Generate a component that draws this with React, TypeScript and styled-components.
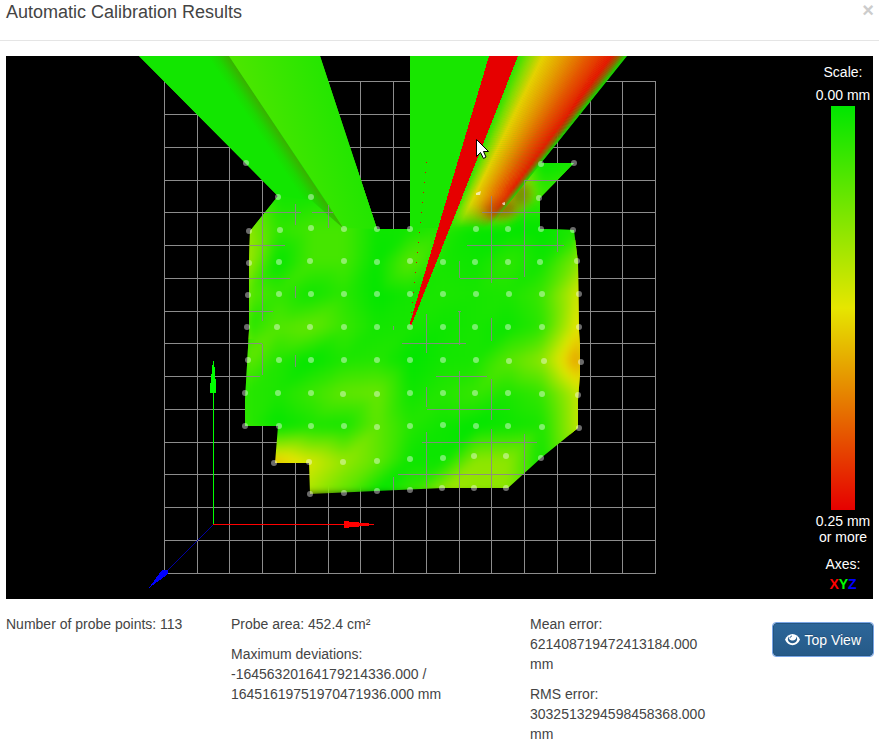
import React from "react";
import styled, { createGlobalStyle } from "styled-components";

const GlobalStyle = createGlobalStyle`
  * { box-sizing: border-box; }
  body {
    margin: 0;
    background: #fff;
    color: #444;
    font: 14px/20px "Liberation Sans", Arial, sans-serif;
  }
`;

const Header = styled.header`
  display: flex;
  justify-content: space-between;
  align-items: flex-start;
  height: 41px;
  padding: 0 5px 0 6px;
  border-bottom: 1px solid #e5e5e5;
`;

const Title = styled.h4`
  margin: 0;
  font-size: 18px;
  line-height: 24px;
  font-weight: 400;
`;

const CloseButton = styled.button`
  padding: 0;
  border: 0;
  background: none;
  color: #ccc;
  font: bold 20px/20px "Liberation Sans", Arial, sans-serif;
  cursor: pointer;
`;

const Body = styled.main`
  padding: 15px 6px 0;
`;

const Viewport = styled.section`
  position: relative;
  background: #000;
  color: #fff;
`;

const Scene = styled.svg`
  display: block;
  width: 100%;
  height: auto;
`;

const Legend = styled.aside`
  position: absolute;
  top: 0;
  right: 0;
  bottom: 0;
  width: 60px;
  padding: 8px 0 7px;
  display: flex;
  flex-direction: column;
  align-items: center;
  text-align: center;
  line-height: 16px;
  white-space: nowrap;
`;

const LegendTitle = styled.div`
  margin-bottom: 7px;
`;

const ScaleBar = styled.div`
  flex: 1;
  width: 24px;
  margin: 3px 0;
  background: linear-gradient(#00e600, #e6e600 50%, #e60000);
`;

const AxesTitle = styled.div`
  margin: 11px 0 4px;
`;

const AxisName = styled.b<{ $color: string }>`
  color: ${(p) => p.$color};
`;

const Summary = styled.section`
  display: grid;
  grid-template-columns: 225fr 299fr 225fr 118fr;
  padding-top: 15px;
`;

const Column = styled.div`
  min-width: 0;
  padding-right: 36px;
`;

const Result = styled.p`
  margin: 0 0 10px;
`;

const Actions = styled.div`
  display: flex;
  justify-content: flex-end;
  align-items: flex-start;
  padding-top: 9px;
`;

const PrimaryButton = styled.button`
  display: inline-flex;
  align-items: center;
  gap: 4px;
  height: 33px;
  padding: 0 11px;
  border: 1px solid #245580;
  border-radius: 3px;
  outline: 1px solid #78a5e6;
  background: linear-gradient(#2d6699, #265a88);
  color: #fff;
  font: 14px/20px "Liberation Sans", Arial, sans-serif;
  text-shadow: 0 -1px 0 rgba(0, 0, 0, 0.2);
  white-space: nowrap;
  cursor: pointer;
`;

const columns = [246, 278, 311, 344, 377, 410, 443, 476, 508, 541, 580];

/* Deviation per vertex: 0 is green, 1 yellow, 2 red. */
const heights: [number, number[]][] = [
  [163, [0.1, 0.1, 0.1, 0.1, 0.1, 0.1, 0.1, 0.4, 0.5, 0, 0.1]],
  [196, [0.2, 0.08, 0.08, 0.1, 0.1, 0.1, 0.2, 0.9, 1.3, 0.25, 0.3]],
  [229, [0.65, 0.2, 0.3, 0.3, 0.05, 0.08, 0.15, 0.02, 0, 0, 0.15]],
  [262, [0.72, 0, 0.3, 0.3, 0.02, 0.4, 0.1, 0.06, 0.2, 0.06, 0.6]],
  [294, [0.42, 0.22, 0.06, 0.18, 0, 0.08, 0.12, 0.1, 0.12, 0.25, 0.95]],
  [327, [0.15, 0.36, 0.44, 0.25, 0.08, 0.1, 0.06, 0.1, 0.04, 0.18, 1.05]],
  [360, [0.45, 0.14, 0, 0.12, 0.15, 0, 0.08, 0.1, 0.38, 0.6, 1.4]],
  [393, [0.17, 0.12, 0.26, 0.42, 0.46, 0.06, 0.16, 0.24, 0.12, 0.22, 0.88]],
  [426, [0.18, 0, 0.1, 0.08, 0.42, 0.15, 0.06, 0, 0.05, 0.1, 0.85]],
  [461, [1.2, 1.15, 0.92, 0.65, 0.42, 0.05, 0.05, 0.62, 0.62, 0.05, 0.2]],
  [494, [1.1, 0.95, 0.7, 0.4, 0, 0.25, 0.7, 0.62, 0.6, 0.1, 0.1]],
];

const shade = (v: number) => {
  const t = Math.max(0, Math.min(2, v));
  return `rgb(${Math.round(230 * Math.min(1, t))},${Math.round(230 * Math.min(1, 2 - t))},0)`;
};

/* Linear interpolation over the two triangles of a cell, split from bottom left to top right. */
const interpolate = (tl: number, tr: number, bl: number, br: number, u: number, v: number) =>
  u + v <= 1 ? tl + (tr - tl) * u + (bl - tl) * v : br + (bl - br) * (1 - u) + (tr - br) * (1 - v);

const STEPS = 6;

const patches = heights.slice(0, -1).flatMap(([top, row], r) => {
  const [bottom, next] = heights[r + 1];
  return columns.slice(0, -1).flatMap((left, c) => {
    const w = (columns[c + 1] - left) / STEPS;
    const h = (bottom - top) / STEPS;
    return Array.from({ length: STEPS * STEPS }, (_, i) => {
      const col = i % STEPS;
      const line = Math.floor(i / STEPS);
      const value = interpolate(
        row[c], row[c + 1], next[c], next[c + 1],
        (col + 0.5) / STEPS, (line + 0.5) / STEPS
      );
      return { x: left + col * w, y: top + line * h, w: w + 1, h: h + 1, fill: shade(value) };
    });
  });
});

function Surface() {
  return (
    <g clipPath="url(#outline)">
      <rect x="120" y="50" width="500" height="180" fill="#18e600" />
      <rect x="236" y="229" width="20" height="110" fill="#a0e600" />
      <rect x="240" y="339" width="20" height="90" fill="#30e600" />
      <rect x="570" y="240" width="20" height="200" fill="#d8e000" />
      <g filter="url(#smooth)">
        {patches.map((p, i) => (
          <rect key={i} x={p.x} y={p.y} width={p.w} height={p.h} fill={p.fill} />
        ))}
      </g>
    </g>
  );
}

const fanStops: [number, number[]][] = [
  [0, [45, 228, 0]],
  [0.1, [130, 220, 0]],
  [0.23, [230, 210, 0]],
  [0.42, [230, 155, 0]],
  [0.65, [230, 85, 0]],
  [0.86, [230, 26, 0]],
  [0.93, [145, 100, 0]],
  [1, [10, 228, 0]],
];

const fanColor = (t: number) => {
  const i = Math.max(1, fanStops.findIndex(([s]) => s >= t));
  const [a, from] = fanStops[i - 1];
  const [b, to] = fanStops[i];
  const k = (t - a) / (b - a);
  return `rgb(${from.map((n, j) => Math.round(n + (to[j] - n) * k)).join(",")})`;
};

function Fan() {
  const count = 72;
  return (
    <g mask="url(#fanFade)">
      {Array.from({ length: count }, (_, i) => {
        const a = i / count;
        const b = Math.min(1, (i + 1.5) / count);
        const top = (t: number) => 518 + 109 * t;
        const foot = (t: number) => 450 + 39 * t;
        return (
          <polygon
            key={i}
            points={`${top(a)},56 ${top(b)},56 ${foot(b)},228 ${foot(a)},228`}
            fill={fanColor((i + 0.5) / count)}
          />
        );
      })}
    </g>
  );
}

const gridX = [164, 197, 229, 262, 295, 328, 360, 393, 426, 459, 491, 524, 557, 590, 622, 655];
const gridY = [81, 114, 147, 180, 212, 245, 278, 311, 343, 376, 409, 442, 474, 507, 540, 573];

const floorGrid =
  gridX.map((x) => `M${x + 0.5} 81V574`).join("") + gridY.map((y) => `M164 ${y + 0.5}H656`).join("");

/* Parts of the floor grid that rise above the surface. */
const exposedV = [
  [262, 214, 321], [262, 344, 375], [295, 204, 225], [295, 286, 298], [295, 355, 367],
  [328, 205, 228], [393, 326, 330], [393, 477, 491], [426, 314, 353], [426, 387, 407],
  [426, 432, 488], [459, 261, 278], [459, 311, 345], [459, 371, 488], [491, 196, 283],
  [491, 318, 341], [491, 379, 420], [491, 429, 488], [524, 180, 277], [524, 434, 473], [557, 230, 252],
];
const exposedH = [
  [180, 524, 558], [212, 263, 301], [212, 312, 333], [212, 482, 540], [245, 250, 285],
  [245, 467, 564], [278, 249, 290], [278, 460, 518], [311, 248, 273], [311, 458, 461],
  [343, 248, 262], [343, 402, 466], [376, 246, 260], [376, 436, 487], [409, 427, 510],
  [442, 422, 537], [474, 398, 525],
];
const exposedGrid =
  exposedV.map(([x, a, b]) => `M${x + 0.5} ${a}V${b}`).join("") +
  exposedH.map(([y, a, b]) => `M${a} ${y + 0.5}H${b}`).join("");

const probes: [number, number][] = [
  [246, 163], [541, 164], [574, 163],
  [278, 197], [311, 197], [539, 198],
  [249, 231], [280, 230], [311, 228], [344, 229], [377, 229], [410, 229], [476, 229], [508, 229], [541, 229], [573, 230],
  [249, 263], [279, 262], [310, 261], [344, 261], [377, 262], [410, 261], [443, 262], [475, 262], [508, 262], [540, 262], [577, 261],
  [248, 295], [279, 294], [311, 294], [344, 294], [377, 294], [410, 294], [443, 294], [476, 294], [509, 294], [542, 294], [579, 294],
  [247, 327], [277, 327], [310, 327], [344, 327], [377, 327], [410, 327], [443, 327], [475, 327], [508, 327], [542, 327], [579, 327],
  [248, 360], [279, 360], [311, 360], [344, 360], [377, 360], [410, 360], [443, 360], [476, 360], [509, 361], [544, 361], [581, 362],
  [245, 393], [278, 393], [311, 393], [343, 394], [377, 394], [410, 393], [443, 393], [475, 393], [508, 393], [542, 394], [578, 395],
  [245, 426], [279, 426], [311, 426], [344, 426], [377, 427], [410, 426], [443, 425], [476, 426], [508, 426], [542, 427], [579, 428],
  [274, 463], [309, 462], [343, 462], [377, 461], [410, 459], [443, 458], [474, 456], [506, 456], [541, 458],
  [310, 494], [344, 493], [377, 491], [410, 490], [442, 488], [474, 488], [506, 488],
];

function HeightMap() {
  return (
    <Scene viewBox="6 56 867 543" role="img" aria-label="Probed height map">
      <defs>
        <filter id="smooth" filterUnits="userSpaceOnUse" x="220" y="140" width="400" height="380" colorInterpolationFilters="sRGB">
          <feGaussianBlur stdDeviation="4" />
        </filter>
        <filter id="haze" x="-50%" y="-50%" width="200%" height="200%">
          <feGaussianBlur stdDeviation="5" />
        </filter>
        <clipPath id="outline">
          <path d="M139 56H320L377 229H410V56H600L541 163H574L540 198V229L574 230L578 262L579 330L580 345V375L578 400V428L541 458L508 488H443L310 494L309 463H275L278 426H245V400L249 330V262L250 231L278 196Z" />
        </clipPath>
        <linearGradient id="leftBeam" gradientUnits="userSpaceOnUse" x1="274" y1="156" x2="289" y2="146">
          <stop offset="0" stopColor="#12e600" />
          <stop offset="0.4" stopColor="#1cd800" />
          <stop offset="1" stopColor="#3ab000" />
        </linearGradient>
        <linearGradient id="midBeam" gradientUnits="userSpaceOnUse" x1="250" y1="110" x2="340" y2="84">
          <stop offset="0" stopColor="#4be600" />
          <stop offset="1" stopColor="#20e600" />
        </linearGradient>
        <linearGradient id="fadeRamp" gradientUnits="userSpaceOnUse" x1="0" y1="188" x2="0" y2="228">
          <stop offset="0" stopColor="#fff" />
          <stop offset="0.4" stopColor="#ccc" />
          <stop offset="1" stopColor="#000" />
        </linearGradient>
        <mask id="fanFade" maskUnits="userSpaceOnUse" x="440" y="50" width="200" height="180">
          <rect x="440" y="50" width="200" height="180" fill="url(#fadeRamp)" />
        </mask>
      </defs>

      <rect x="6" y="56" width="867" height="543" fill="#000" />
      <path d={floorGrid} stroke="#8c8c8c" fill="none" shapeRendering="crispEdges" />

      <Surface />
      <path d="M139 56H229L344 229L311 200L278 196Z" fill="url(#leftBeam)" />
      <path d="M229 56H320L377 229L344 228Z" fill="url(#midBeam)" />
      <path d="M410 56H518L450 228H410Z" fill="#18e600" />
      <g clipPath="url(#outline)">
        <ellipse cx="500" cy="208" rx="18" ry="10" fill="#8a5a00" opacity="0.8" filter="url(#haze)" />
        <ellipse cx="520" cy="194" rx="11" ry="13" fill="#688000" opacity="0.8" filter="url(#haze)" />
      </g>
      <Fan />
      <path d="M489 56H518L411 326L410 323Z" fill="#e60000" shapeRendering="crispEdges" />

      <path d={exposedGrid} stroke="#908090" strokeOpacity="0.85" fill="none" shapeRendering="crispEdges" />
      <g fill="#e60000" shapeRendering="crispEdges">
        {Array.from({ length: 16 }, (_, i) => (
          <rect key={i} x={426 - i} y={162 + i * 10} width="1" height="1" />
        ))}
      </g>
      <g fill="#fff" fillOpacity="0.42">
        {probes.map(([x, y], i) => (
          <circle key={i} cx={x} cy={y} r="3" />
        ))}
        <path d="M476 193L481 191L480 195H476ZM502 203L505 202V205H503Z" fillOpacity="0.65" />
      </g>

      <g shapeRendering="crispEdges">
        <path d="M213.5 524V361" stroke="#0f0" />
        <path d="M213 361H214L216 385V393H210V388Z" fill="#0f0" />
        <path d="M213 524.5H374" stroke="#f00" />
        <path d="M344 521L374 524V525L344 528Z" fill="#f00" />
        <path d="M213 525L167 571" stroke="#0000a0" />
        <path d="M149 588L161 571L163 570H168V573L164 577Z" fill="#00f" />
      </g>

      <path d="M476.5 139.5V156.5L480.5 152.5L483.5 158.5L486 157L483.5 151.5H488.5Z" fill="#fff" stroke="#000" />
    </Scene>
  );
}

function EyeIcon() {
  return (
    <svg width="15" height="14" viewBox="0 0 15 14" aria-hidden="true">
      <path d="M0 6.6C1.6 3.2 4.3 1 7.5 1S13.4 3.2 15 6.6C13.4 10.2 10.7 12.3 7.5 12.3S1.6 10.2 0 6.6Z" fill="#fff" />
      <path d="M3.7 3.6C1.7 6.2 3.3 10.2 7.5 10.2S13.3 6.2 11.3 3.6C12 8.9 3 8.9 3.7 3.6Z" fill="#285d8d" />
      <path d="M5 5.2C5 4 5.8 3.1 7 3.1" fill="none" stroke="#285d8d" />
    </svg>
  );
}

export default function App() {
  return (
    <>
      <GlobalStyle />
      <Header>
        <Title>Automatic Calibration Results</Title>
        <CloseButton type="button" aria-label="Close">×</CloseButton>
      </Header>
      <Body>
        <Viewport>
          <HeightMap />
          <Legend>
            <LegendTitle>Scale:</LegendTitle>
            <div>0.00 mm</div>
            <ScaleBar />
            <div>0.25 mm<br />or more</div>
            <AxesTitle>Axes:</AxesTitle>
            <div>
              <AxisName $color="#f00">X</AxisName>
              <AxisName $color="#0f0">Y</AxisName>
              <AxisName $color="#00f">Z</AxisName>
            </div>
          </Legend>
        </Viewport>
        <Summary>
          <Column>
            <Result>Number of probe points: 113</Result>
          </Column>
          <Column>
            <Result>Probe area: 452.4 cm²</Result>
            <Result>Maximum deviations: -16456320164179214336.000 / 16451619751970471936.000 mm</Result>
          </Column>
          <Column>
            <Result>Mean error: 621408719472413184.000 mm</Result>
            <Result>RMS error: 3032513294598458368.000 mm</Result>
          </Column>
          <Actions>
            <PrimaryButton type="button"><EyeIcon />Top View</PrimaryButton>
          </Actions>
        </Summary>
      </Body>
    </>
  );
}
